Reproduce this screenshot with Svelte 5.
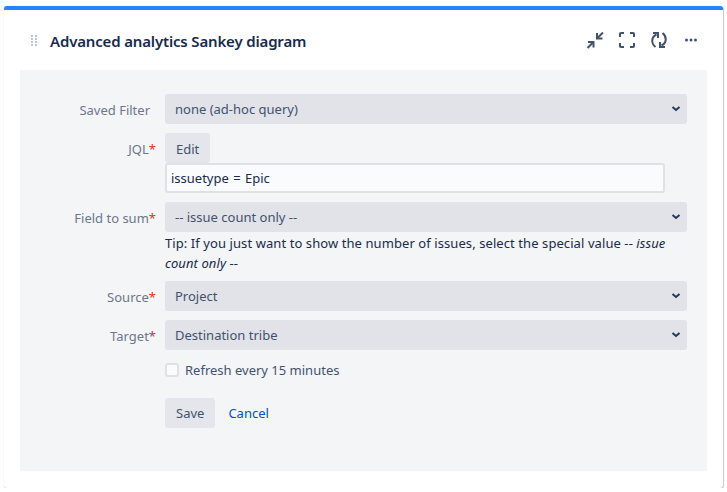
<script>
  let filter = $state('none');
  let jql = $state('issuetype = Epic');
  let refresh = $state(false);
</script>

<div class="gadget">
  <header class="head">
    <svg class="grip" width="6" height="11" viewBox="0 0 6 11" fill="#c1c7d0">
      <rect x="0" y="0" width="2" height="2" /><rect x="4" y="0" width="2" height="2" />
      <rect x="0" y="3" width="2" height="2" /><rect x="4" y="3" width="2" height="2" />
      <rect x="0" y="6" width="2" height="2" /><rect x="4" y="6" width="2" height="2" />
      <rect x="0" y="9" width="2" height="2" /><rect x="4" y="9" width="2" height="2" />
    </svg>
    <h2>Advanced analytics Sankey diagram</h2>
    <div class="tools">
      <svg width="24" height="24" viewBox="0 0 24 24" fill="none" stroke="#42526e" stroke-width="2">
        <path d="M14 5v5.500h5.500" /><path d="M14.500 10 20 4.500" />
        <path d="M5 14h5.500v5.500" /><path d="M10 14.500 4.500 20" />
      </svg>
      <svg width="24" height="24" viewBox="0 0 24 24" fill="none" stroke="#42526e" stroke-width="2">
        <path d="M9 5H6a1 1 0 0 0-1 1v3" /><path d="M15 5h3a1 1 0 0 1 1 1v3" />
        <path d="M5 15v3a1 1 0 0 0 1 1h3" /><path d="M19 15v3a1 1 0 0 1-1 1h-3" />
      </svg>
      <svg width="24" height="24" viewBox="0 0 24 24" fill="none" stroke="#42526e" stroke-width="2">
        <path d="M8.500 19C4 15.500 4 9 9.500 6.500" /><path d="M6 5h5v5" />
        <path d="M15.500 5C20 8.500 20 15 14.500 17.500" /><path d="M18 19h-5v-5" />
      </svg>
      <svg width="24" height="24" viewBox="0 0 24 24" fill="#42526e">
        <circle cx="7.500" cy="12" r="1.500" /><circle cx="12" cy="12" r="1.500" /><circle cx="16.500" cy="12" r="1.500" />
      </svg>
    </div>
  </header>

  <form class="panel">
    <div class="row">
      <label class="lbl plain" for="filter">Saved Filter</label>
      <select id="filter" bind:value={filter}>
        <option value="none">none (ad-hoc query)</option>
      </select>
    </div>

    <div class="row">
      <label class="lbl" for="jql">JQL<span class="req">*</span></label>
      <div class="field">
        <button type="button" class="btn">Edit</button>
        <input id="jql" class="jql" type="text" bind:value={jql} />
      </div>
    </div>

    <div class="row">
      <label class="lbl" for="sum">Field to sum<span class="req">*</span></label>
      <div class="field">
        <select id="sum"><option>-- issue count only --</option></select>
        <p class="tip">Tip: If you just want to show the number of issues, select the special value -- <em>issue</em> <em>count only</em> --</p>
      </div>
    </div>

    <div class="row">
      <label class="lbl" for="source">Source<span class="req">*</span></label>
      <select id="source"><option>Project</option></select>
    </div>

    <div class="row">
      <label class="lbl" for="target">Target<span class="req">*</span></label>
      <select id="target"><option>Destination tribe</option></select>
    </div>

    <div class="row check">
      <span></span>
      <label class="refresh"><input type="checkbox" bind:checked={refresh} /><span class="box"></span>Refresh every 15 minutes</label>
    </div>

    <div class="row actions">
      <span></span>
      <div class="btns">
        <button type="button" class="btn save">Save</button>
        <a href="#cancel">Cancel</a>
      </div>
    </div>
  </form>
</div>

<style>
  :global(body) {
    background: #fff;
    font-family: "Noto Sans", "Open Sans", sans-serif;
    font-size: 13px;
    color: #172b4d;
  }
  .gadget {
    box-sizing: border-box;
    width: 719px;
    height: 482px;
    margin: 6px 0 0 4px;
    background: #fff;
    border-top: 4px solid #2684ff;
    border-radius: 3px;
    box-shadow: 1px 1px 1px rgba(9, 30, 66, 0.22), 0 0 1px rgba(9, 30, 66, 0.25);
    padding: 0 16px 17px;
    display: flex;
    flex-direction: column;
  }
  .head {
    display: flex;
    align-items: center;
    height: 60px;
    flex: none;
    padding-left: 11px;
  }
  .grip { margin-right: 13px; }
  h2 {
    margin: 0;
    font-size: 15px;
    font-weight: 600;
    letter-spacing: -0.16px;
    color: #172b4d;
    flex: 1;
    position: relative;
    top: 1px;
  }
  .tools {
    display: flex;
    gap: 8px;
    padding-right: 4px;
  }
  .panel {
    flex: 1;
    background: #f4f5f7;
    padding: 24px 20px 0 0;
    display: flex;
    flex-direction: column;
    gap: 9px;
  }
  .row {
    display: grid;
    grid-template-columns: 145px 522px;
    align-items: start;
  }
  .lbl {
    text-align: right;
    padding: 6px 9px 0 0;
    line-height: 20px;
    color: #6b778c;
  }
  .plain { padding-right: 15px; }
  .req { color: #de350b; }
  select {
    width: 100%;
    height: 30px;
    box-sizing: border-box;
    border: none;
    border-radius: 3px;
    background: #e1e3e8 url("data:image/svg+xml,%3Csvg xmlns='http://www.w3.org/2000/svg' width='10' height='6'%3E%3Cpath d='M1.500 1l3.500 3 3.500-3' fill='none' stroke='%23253858' stroke-width='2'/%3E%3C/svg%3E") no-repeat right 6px center;
    color: #42526e;
    font: inherit;
    padding: 0 24px 0 10px;
    display: block;
    appearance: none;
  }
  .field { display: flex; flex-direction: column; align-items: flex-start; }
  .btn {
    height: 30px;
    border: none;
    border-radius: 3px;
    background: #e4e6eb;
    color: #42526e;
    font: inherit;
    padding: 1px 11px 0;
  }
  .save { padding-top: 0; }
  .jql {
    box-sizing: border-box;
    width: 500px;
    height: 30px;
    border: 2px solid #dfe1e6;
    border-radius: 3px;
    background: #fafbfc;
    color: #172b4d;
    font: inherit;
    word-spacing: 1px;
    padding: 0 4px;
    outline: none;
  }
  .tip {
    margin: 1px 0 -1px;
    line-height: 20px;
    color: #172b4d;
    font-size: 13px;
    letter-spacing: 0.08px;
  }
  .check { margin-top: 1px; }
  .refresh {
    display: flex;
    align-items: center;
    gap: 6px;
    line-height: 20px;
    color: #42526e;
  }
  .refresh input { position: absolute; opacity: 0; }
  .box {
    box-sizing: border-box;
    width: 14px;
    height: 14px;
    border: 2px solid #dfe1e6;
    border-radius: 3px;
    background: #fafbfc;
  }
  .actions { margin-top: 9px; }
  .btns { display: flex; align-items: center; gap: 13px; }
  a { color: #0052cc; text-decoration: none; }
</style>
